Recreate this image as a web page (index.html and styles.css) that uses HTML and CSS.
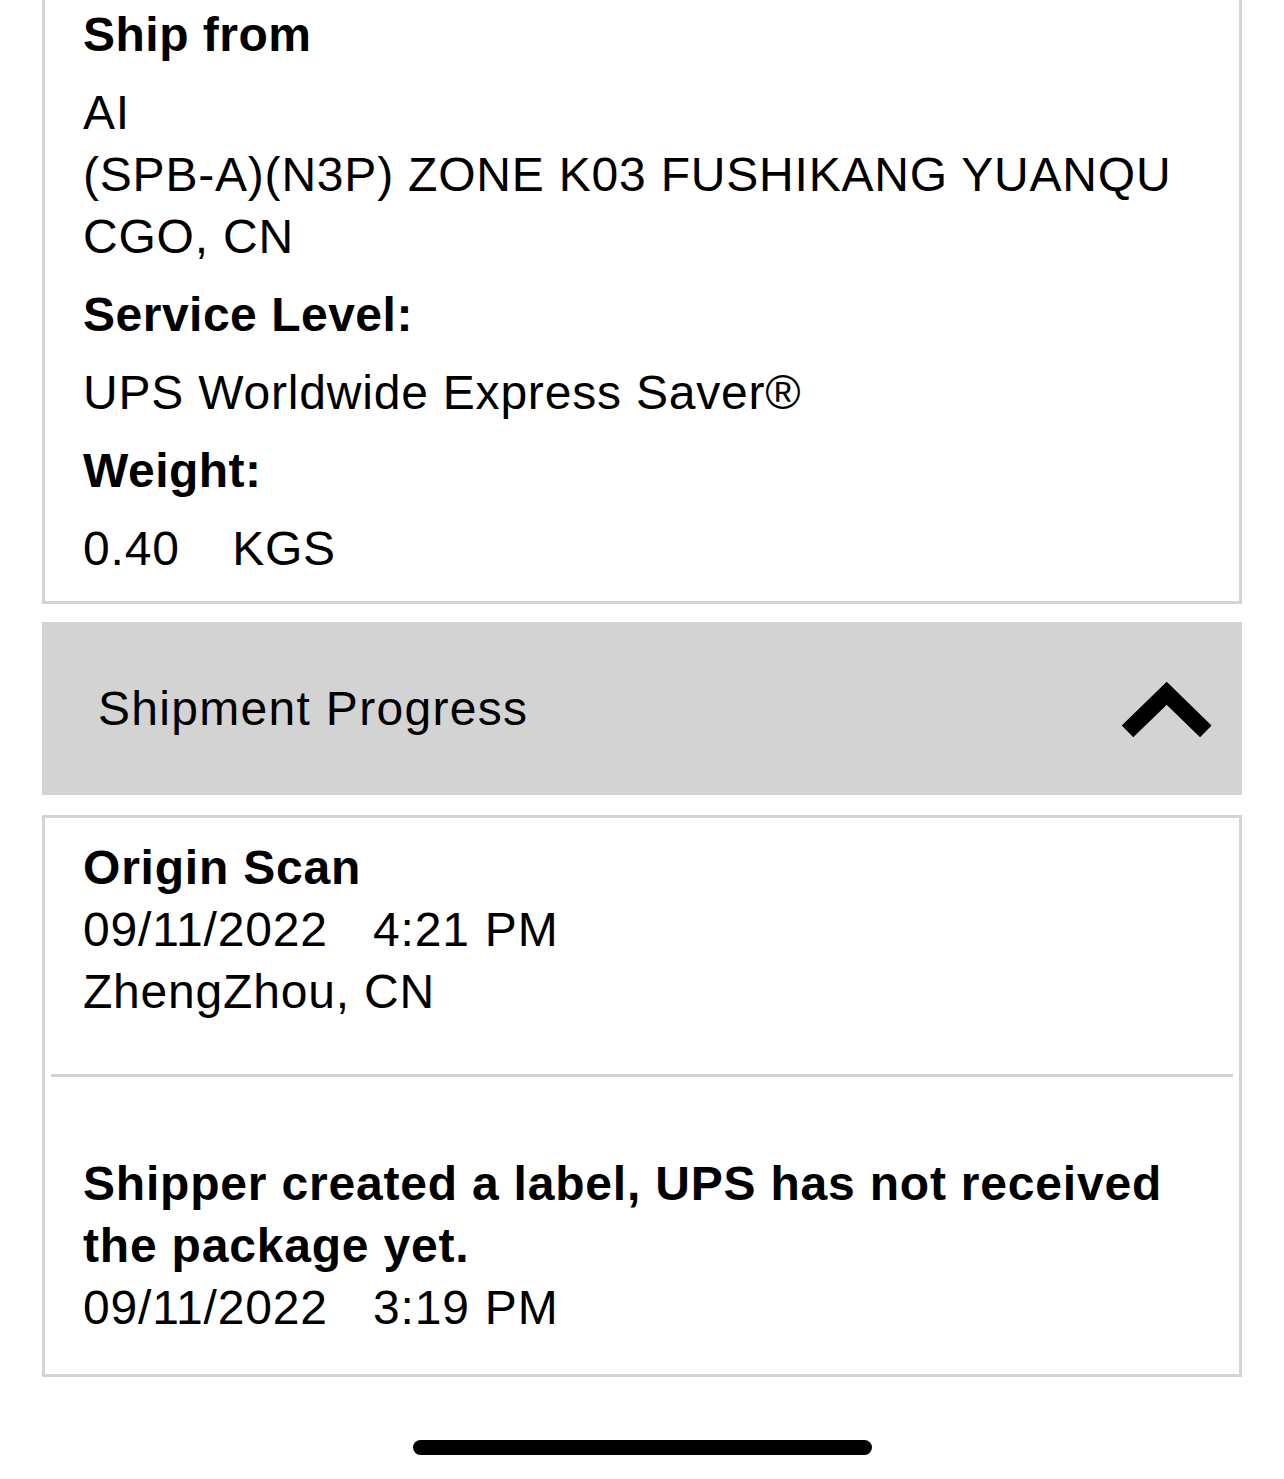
FILE: index.html
```html
<!DOCTYPE html>
<html lang="en">
<head>
<meta charset="utf-8">
<title>Shipment Details</title>
<link rel="stylesheet" href="styles.css">
</head>
<body>
<main class="page">
  <section class="card details">
    <h2 class="label first">Ship from</h2>
    <div class="value">
      <div>AI</div>
      <div>(SPB-A)(N3P) ZONE K03 FUSHIKANG YUANQU</div>
      <div>CGO, CN</div>
    </div>
    <h2 class="label">Service Level:</h2>
    <div class="value">UPS Worldwide Express Saver®</div>
    <h2 class="label">Weight:</h2>
    <div class="value pre">0.40    KGS</div>
  </section>

  <section class="progress-bar">
    <span class="progress-title">Shipment Progress</span>
    <svg class="chevron" width="92" height="60" viewBox="0 0 92 60" aria-hidden="true">
      <polyline points="7.5,52.3 46.7,14.3 85.8,52.3" fill="none" stroke="#000" stroke-width="16.5" stroke-linejoin="miter" stroke-linecap="butt"/>
    </svg>
  </section>

  <section class="card events">
    <div class="event event-first">
      <div class="event-title">Origin Scan</div>
      <div class="event-line pre">09/11/2022   4:21 PM</div>
      <div class="event-line">ZhengZhou, CN</div>
    </div>
    <hr class="divider">
    <div class="event event-last">
      <div class="event-title">Shipper created a label, UPS has not received the package yet.</div>
      <div class="event-line pre">09/11/2022   3:19 PM</div>
    </div>
  </section>

  <div class="home-area">
    <div class="home-indicator"></div>
  </div>
</main>
</body>
</html>
```

FILE: styles.css
```css
* { box-sizing: border-box; }

html, body {
  margin: 0;
  padding: 0;
  background: #ffffff;
}

body {
  font-family: "Liberation Sans", Arial, sans-serif;
  color: #000000;
  font-size: 48px;
  line-height: 62px;
  letter-spacing: 0.8px;
}

.page {
  width: 1284px;
  height: 1479px;
  padding: 0 42px 0 42px;
  display: flex;
  flex-direction: column;
  overflow: hidden;
}

.card {
  border: 3px solid #d4d4d4;
  background: #ffffff;
}

.details {
  border-top: none;
  padding: 4px 30px 21px 38px;
}

.label {
  margin: 16px 0 16px 0;
  font-size: 48px;
  font-weight: 700;
  line-height: 62px;
  letter-spacing: 0.5px;
}

.label.first {
  margin-top: 0;
}

.value {
  margin: 0;
}

.pre {
  white-space: pre;
}

.value.pre {
  word-spacing: -1px;
}

.event-line.pre {
  word-spacing: 1px;
}

.progress-bar {
  margin-top: 18px;
  height: 173px;
  background: #d3d3d3;
  display: flex;
  align-items: center;
  justify-content: space-between;
  padding: 0 30px 0 56px;
}

.progress-title {
  font-size: 48px;
  line-height: 62px;
  letter-spacing: 1.3px;
}

.chevron {
  display: block;
  flex: none;
}

.events {
  margin-top: 20px;
  padding: 19px 6px 35px 6px;
}

.event {
  padding: 0 20px 0 32px;
  line-height: 62px;
}

.event-first {
  padding-bottom: 51px;
}

.event-last {
  padding-top: 76px;
}

.event-title {
  font-weight: 700;
}

.divider {
  margin: 0;
  border: none;
  height: 3px;
  background: #d6d2ce;
}

.home-area {
  flex: 1;
  display: flex;
  justify-content: center;
  align-items: flex-start;
  padding-top: 63px;
}

.home-indicator {
  width: 459px;
  height: 15px;
  border-radius: 8px;
  background: #000000;
}
```
